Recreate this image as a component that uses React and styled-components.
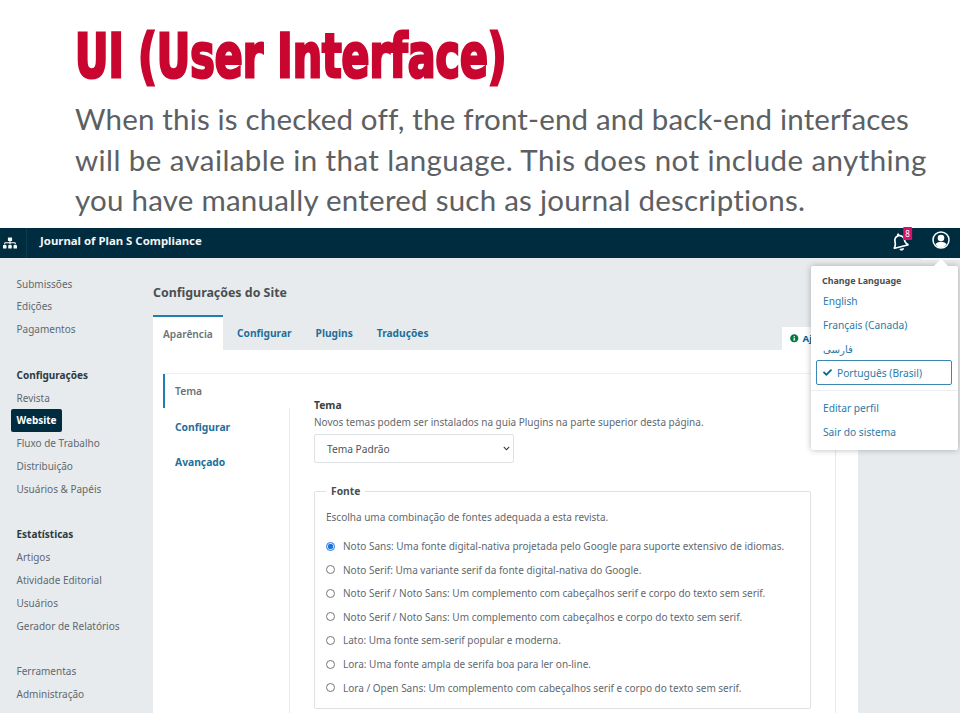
import React from "react";
import styled, { createGlobalStyle } from "styled-components";
import { FaSitemap, FaCheck, FaInfoCircle, FaRegBell, FaChevronDown } from "react-icons/fa";

const Global = createGlobalStyle`
  html, body { margin: 0; padding: 0; background: #fff; }
  body { width: 960px; height: 720px; overflow: hidden; }
`;
const Page = styled.div`
  width: 960px; height: 720px; position: relative; overflow: hidden; background: #fff;
  font-family: "Noto Sans", "DejaVu Sans", sans-serif;
`;
const Slide = styled.header`
  padding: 27px 0 0 75px; height: 228px; box-sizing: border-box;
`;
const Title = styled.h1`
  margin: 0; font-family: "DejaVu Sans Condensed", "DejaVu Sans", sans-serif; font-weight: 700;
  font-size: 61px; line-height: 58px; color: #c8062f;
  -webkit-text-stroke: 2.8px #c8062f; white-space: nowrap;
  transform-origin: 0 50%; transform: scaleX(0.75);
`;
const Lead = styled.p`
  margin: 14px 0 0; font-family: "Lato", sans-serif; font-size: 29.5px; line-height: 40.5px; color: #5c6063;
  font-variant-ligatures: none; white-space: nowrap;
`;
const LeadLine = styled.span`
  display: block; letter-spacing: ${p => p.$track}px;
`;
const Shot = styled.div`
  height: 485px; display: flex; flex-direction: column; background: #e8ebed; position: relative;
`;
const TopBar = styled.div`
  height: 30px; background: #002c40; display: flex; align-items: center; color: #fff; flex: none; padding-bottom: 6px; box-sizing: border-box;
`;
const Org = styled.div`
  width: 27px; height: 30px; margin-bottom: -6px; padding: 0 6px 0 0; display: flex; align-items: center; justify-content: center;
  border-right: 1px solid #0c3a4e; box-sizing: border-box; font-size: 14px;
`;
const JournalName = styled.div`
  margin-left: 13px; font-size: 11.4px; font-weight: 700; flex: 1; color: #f2f5f6;
`;
const BellWrap = styled.div`
  position: relative; width: 18px; height: 18px; margin-right: 12px; margin-top: 4px; display: flex; align-items: center; transform: rotate(-14deg);
  font-size: 18px;
`;
const Badge = styled.span`
  position: absolute; left: 14px; top: -4px; width: 9px; height: 13px; background: #d4126e; color: #fff;
  font-size: 8px; line-height: 13px; text-align: center; transform: rotate(14deg); border-radius: 1px;
`;
const UserBtn = styled.div`
  width: 39px; height: 30px; margin-bottom: -6px; padding-bottom: 7px; display: flex; align-items: center; justify-content: center;
  box-sizing: border-box; box-shadow: 0 2px 0 #f3f4f5;
`;
const Body = styled.div`
  flex: 1; display: flex; min-height: 0;
`;
const Side = styled.nav`
  width: 153px; flex: none; padding: 14.5px 0 0 11px; box-sizing: border-box;
`;
const NavGroup = styled.div`
  margin-bottom: 22.7px; display: flex; flex-direction: column; align-items: flex-start;
`;
const NavItem = styled.div`
  font-size: 10px; line-height: 15px; padding: 4px 5.5px 3.85px; color: ${p => p.$head ? "#2c3a42" : "#5f696f"};
  font-weight: ${p => p.$head ? 700 : 400}; border-radius: 2px;
  ${p => p.$active && "background:#002c40;color:#fff;font-weight:700;"}
`;
const Main = styled.main`
  flex: 1; padding-right: 102px; display: flex; flex-direction: column; min-width: 0;
`;
const PageTitle = styled.h2`
  margin: 26px 0 0; font-size: 12.4px; line-height: 17px; font-weight: 700; color: #4a4f52;
`;
const Tabs = styled.div`
  display: flex; align-items: flex-end; margin-top: 14px; height: 35px; flex: none; position: relative;
`;
const Tab = styled.div`
  height: 35px; box-sizing: border-box; padding: 0 10px; line-height: 37px; font-size: 10.2px; margin-right: 4px;
  color: ${p => p.$on ? "#6a7378" : "#1f6f9b"}; font-weight: ${p => p.$on ? 600 : 700};
  ${p => p.$on && "background:#fff;border-top:2px solid #1e7fb0;line-height:35px;width:70px;"}
`;
const HelpBtn = styled.div`
  margin-left: auto; width: 76px; height: 23px; background: #fff; box-sizing: border-box;
  padding-left: 8px; display: flex; align-items: center; gap: 4px; font-size: 9.6px; font-weight: 700; color: #006798;
  svg { color: #00793e; font-size: 8.5px; }
`;
const Panel = styled.section`
  flex: 1; background: #fff; padding: 23px 22px 0 10px; display: flex; min-height: 0; position: relative;
  &::after { content: ""; position: absolute; top: 23px; bottom: 0; right: 22px; width: 1px; background: #e8eaec; }
`;
const SideTabs = styled.div`
  width: 127px; flex: none; border-top: 1px solid #eceef0; box-sizing: border-box; position: relative;
  &::after { content: ""; position: absolute; left: 126px; top: 34px; bottom: 0; width: 1px; background: #e8eaec; }
`;
const SideTab = styled.div`
  height: 35px; line-height: 38px; padding-left: 12px; font-size: 10.3px; color: #1f6f9b; font-weight: 700;
  ${p => p.$on && "padding-left: 10px; color:#6a7378; font-weight:600; border-left: 2px solid #1e7fb0; height: 34px; line-height: 34px;"}
`;
const Content = styled.div`
  flex: 1; min-width: 0; border-top: 1px solid #eceef0; padding: 24px 25px 0 24px;
`;
const Label = styled.div`
  font-size: 10.3px; line-height: 15px; font-weight: 700; color: #3a3f42;
`;
const Desc = styled.div`
  font-size: 10px; line-height: 17px; margin-top: 1px; color: #5f696f;
`;
const SelectWrap = styled.div`
  position: relative; width: 200px; height: 29px; margin-top: 3px;
  svg { position: absolute; right: 4px; top: 11px; font-size: 7px; color: #333; pointer-events: none; }
`;
const Select = styled.select`
  appearance: none; display: block; width: 100%; height: 100%; background: #fff; border: 1px solid #dfe2e4; border-radius: 2px;
  font-family: inherit; font-size: 10.2px; color: #4e565b; padding: 0 12px; box-sizing: border-box;
`;
const Fieldset = styled.fieldset`
  margin: 21px 0 0; padding: 11px 9px 0 11px; border: 1px solid #dfe2e4; border-radius: 2px; min-width: 0; height: 225px; box-sizing: border-box;
`;
const Legend = styled.legend`
  padding: 0 5px; margin-left: 0; font-size: 10.3px; line-height: 15px; font-weight: 700; color: #4a4f52;
`;
const FieldHelp = styled.div`
  font-size: 10px; line-height: 15px; color: #5f696f; margin-bottom: 9.5px;
`;
const RadioRow = styled.label`
  display: flex; align-items: center; height: 23.55px; font-size: 10px; color: #5f696f; white-space: nowrap;
`;
const Radio = styled.input.attrs({ type: "radio" })`
  width: 9px; height: 9px; margin: 0 8px 0 0; accent-color: #1a73e8; flex: none;
`;
const Menu = styled.div`
  position: absolute; left: 811px; top: 38px; width: 147px; height: 184px; background: #fff; border-radius: 2px;
  box-shadow: 0 0 6px rgba(0,0,0,.28); padding: 8px 6px 0; box-sizing: border-box;
  &::before { content: ""; position: absolute; right: 12px; top: -5px; width: 10px; height: 10px; background: #fff; transform: rotate(45deg); }
`;
const MenuHead = styled.div`
  font-size: 8.9px; line-height: 14px; font-weight: 700; color: #4a4f52; padding-left: 5px; margin-bottom: 1px;
`;
const MenuItem = styled.div`
  font-size: 10.2px; line-height: 24px; height: 24px; color: #2b7aa8; padding-left: 6px;
`;
const MenuActive = styled.div`
  height: 25px; margin: -1px 0 0 -1px; border: 1px solid #3c88b4; border-radius: 2px; display: flex; align-items: center; gap: 5px;
  padding-left: 6px; font-size: 10.2px; color: #2b7aa8; box-sizing: border-box; width: 136px;
  svg { font-size: 9px; color: #006798; }
`;
const MenuRule = styled.div`
  height: 1px; background: #eceeef; margin: 5px -6px 5px;
`;

const UserIcon = () => (
  <svg width="18" height="18" viewBox="0 0 18 18">
    <circle cx="9" cy="9" r="8" fill="none" stroke="#fff" strokeWidth="1.5" />
    <circle cx="9" cy="7" r="3.3" fill="#fff" />
    <path d="M3.4 13.6C4.4 11.6 6.4 10.8 9 10.8s4.6.8 5.6 2.8A7.6 7.6 0 0 1 9 16.4a7.6 7.6 0 0 1-5.6-2.8Z" fill="#fff" />
  </svg>
);

const nav = [
  [["Submissões"], ["Edições"], ["Pagamentos"]],
  [["Configurações", "h"], ["Revista"], ["Website", "a"], ["Fluxo de Trabalho"], ["Distribuição"], ["Usuários & Papéis"]],
  [["Estatísticas", "h"], ["Artigos"], ["Atividade Editorial"], ["Usuários"], ["Gerador de Relatórios"]],
  [["Ferramentas"], ["Administração"]],
];
const fonts = [
  "Noto Sans: Uma fonte digital-nativa projetada pelo Google para suporte extensivo de idiomas.",
  "Noto Serif: Uma variante serif da fonte digital-nativa do Google.",
  "Noto Serif / Noto Sans: Um complemento com cabeçalhos serif e corpo do texto sem serif.",
  "Noto Serif / Noto Sans: Um complemento com cabeçalhos e corpo do texto sem serif.",
  "Lato: Uma fonte sem-serif popular e moderna.",
  "Lora: Uma fonte ampla de serifa boa para ler on-line.",
  "Lora / Open Sans: Um complemento com cabeçalhos serif e corpo do texto sem serif.",
];

export default function App() {
  return (
    <Page>
      <Global />
      <Slide>
        <Title>UI (User Interface)</Title>
        <Lead>
          <LeadLine $track={0.17}>When this is checked off, the front-end and back-end interfaces</LeadLine>
          <LeadLine $track={0.42}>will be available in that language. This does not include anything</LeadLine>
          <LeadLine $track={0.24}>you have manually entered such as journal descriptions.</LeadLine>
        </Lead>
      </Slide>
      <Shot>
        <TopBar>
          <Org><FaSitemap /></Org>
          <JournalName>Journal of Plan S Compliance</JournalName>
          <BellWrap><FaRegBell /><Badge>8</Badge></BellWrap>
          <UserBtn><UserIcon /></UserBtn>
        </TopBar>
        <Body>
          <Side>
            {nav.map((g, i) => (
              <NavGroup key={i}>
                {g.map(([t, k]) => <NavItem key={t} $head={k === "h"} $active={k === "a"}>{t}</NavItem>)}
              </NavGroup>
            ))}
          </Side>
          <Main>
            <PageTitle>Configurações do Site</PageTitle>
            <Tabs>
              <Tab $on>Aparência</Tab>
              <Tab>Configurar</Tab>
              <Tab>Plugins</Tab>
              <Tab>Traduções</Tab>
              <HelpBtn><FaInfoCircle />Ajuda</HelpBtn>
            </Tabs>
            <Panel>
              <SideTabs>
                <SideTab $on>Tema</SideTab>
                <SideTab>Configurar</SideTab>
                <SideTab>Avançado</SideTab>
              </SideTabs>
              <Content>
                <Label>Tema</Label>
                <Desc>Novos temas podem ser instalados na guia Plugins na parte superior desta página.</Desc>
                <SelectWrap>
                  <Select defaultValue="a"><option value="a">Tema Padrão</option></Select>
                  <FaChevronDown />
                </SelectWrap>
                <Fieldset>
                  <Legend>Fonte</Legend>
                  <FieldHelp>Escolha uma combinação de fontes adequada a esta revista.</FieldHelp>
                  {fonts.map((f, i) => (
                    <RadioRow key={i}><Radio name="font" defaultChecked={i === 0} />{f}</RadioRow>
                  ))}
                </Fieldset>
              </Content>
            </Panel>
          </Main>
        </Body>
        <Menu>
          <MenuHead>Change Language</MenuHead>
          <MenuItem>English</MenuItem>
          <MenuItem>Français (Canada)</MenuItem>
          <MenuItem>فارسی</MenuItem>
          <MenuActive><FaCheck />Português (Brasil)</MenuActive>
          <MenuRule />
          <MenuItem>Editar perfil</MenuItem>
          <MenuItem>Sair do sistema</MenuItem>
        </Menu>
      </Shot>
    </Page>
  );
}
